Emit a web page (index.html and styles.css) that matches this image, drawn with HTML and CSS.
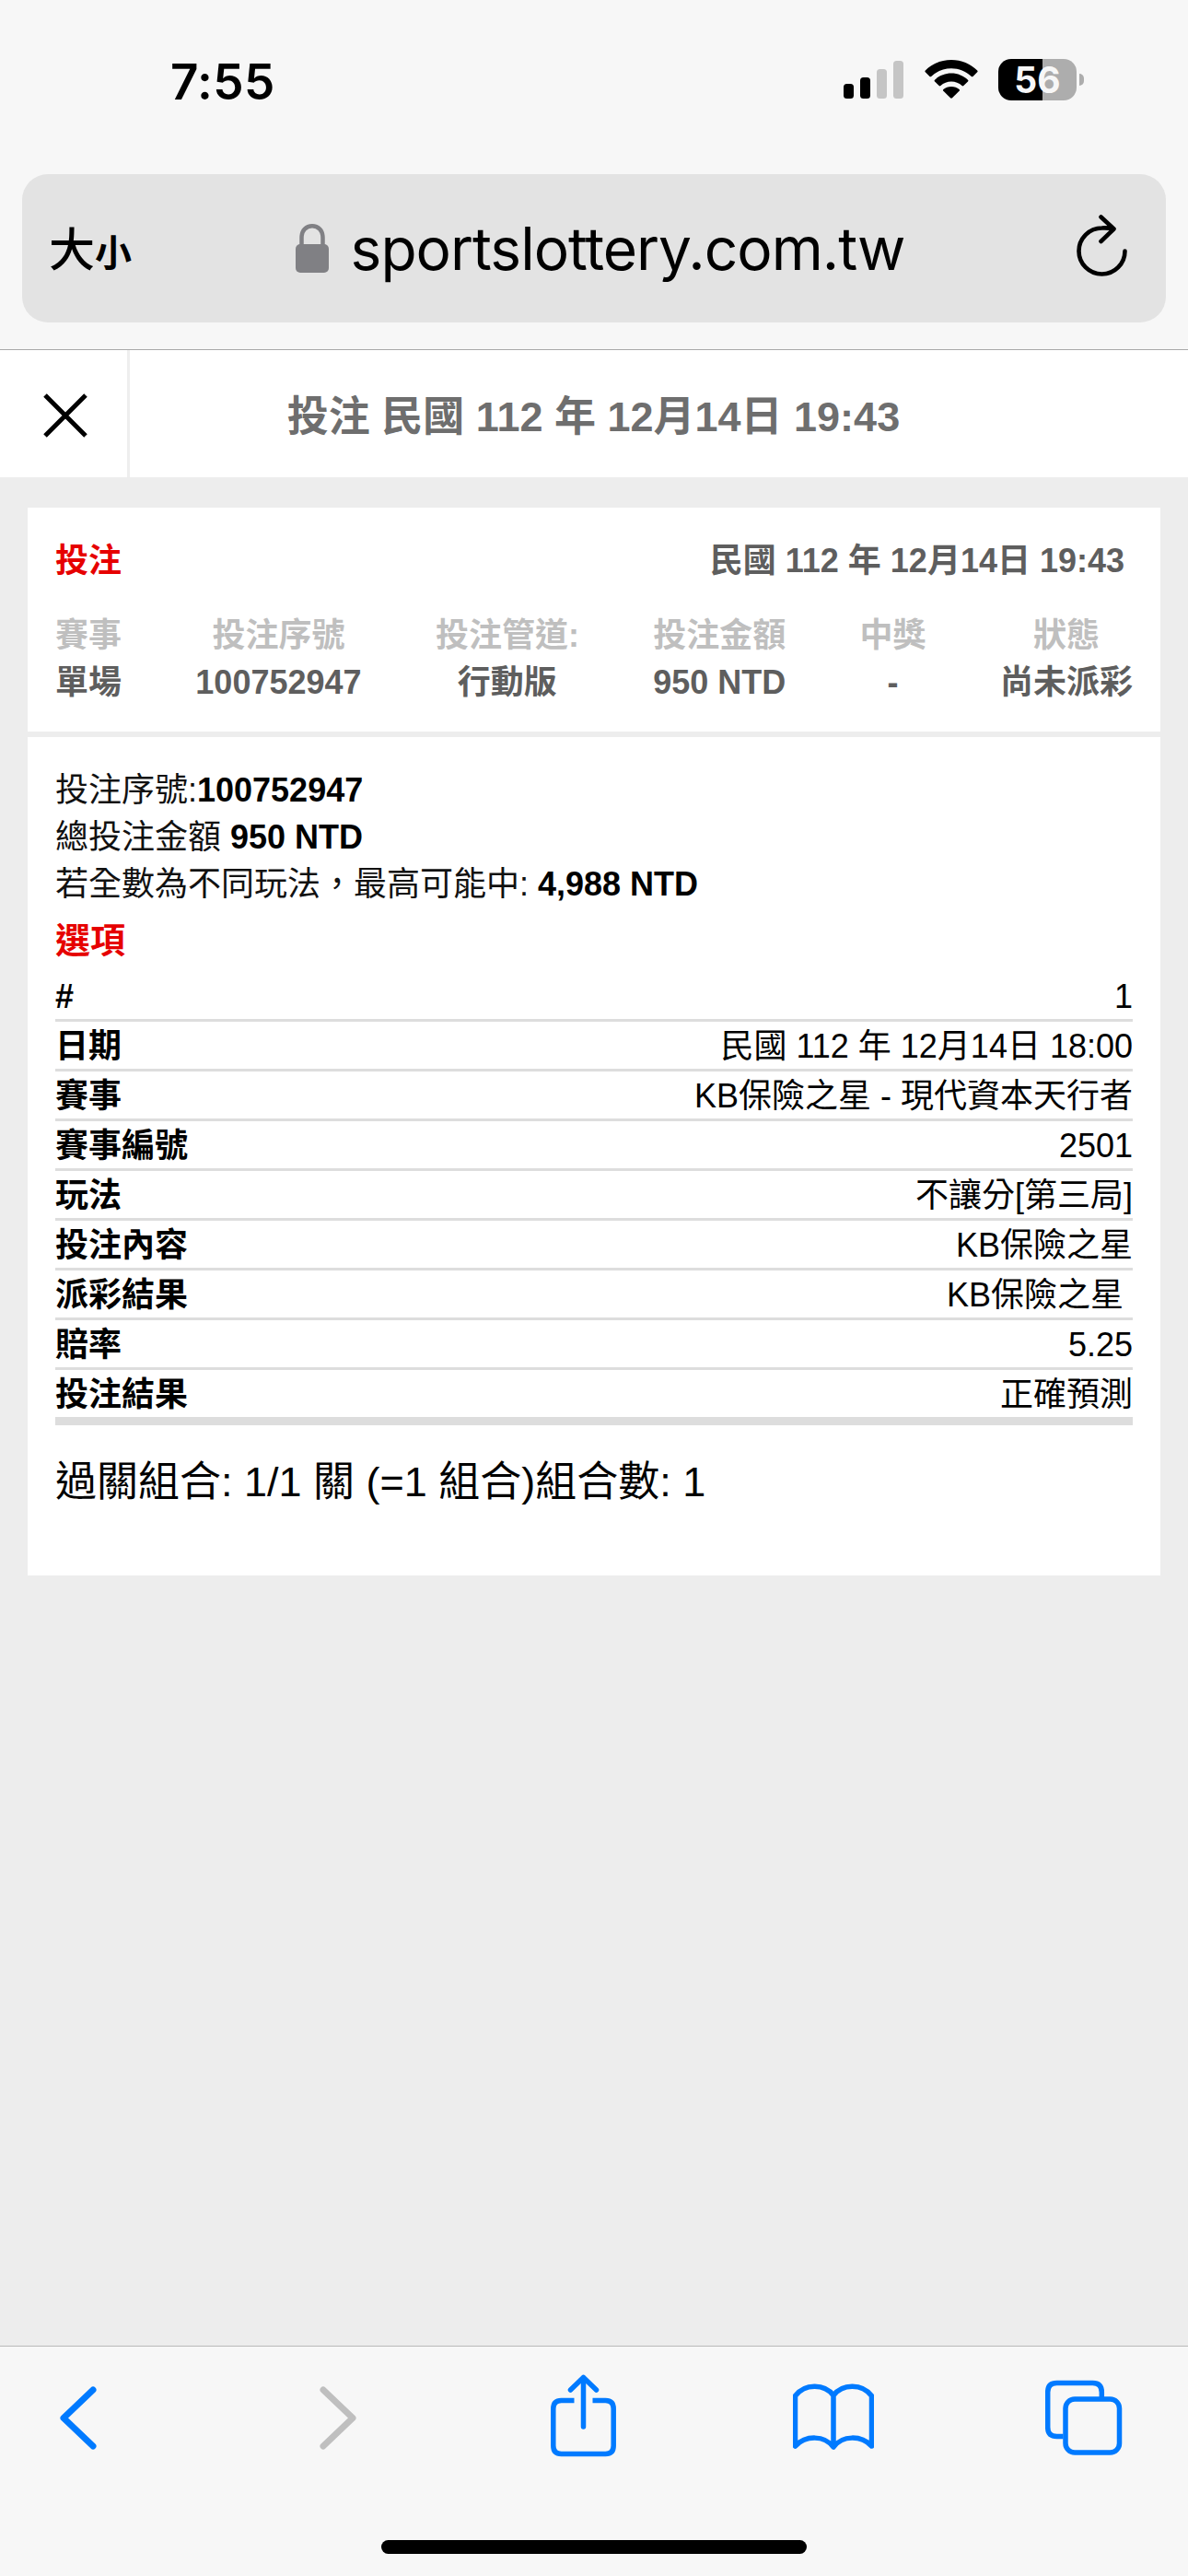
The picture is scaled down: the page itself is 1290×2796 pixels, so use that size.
FILE: index.html
```html
<!DOCTYPE html>
<html lang="zh-TW">
<head>
    <meta charset="UTF-8">
    <meta name="viewport" content="width=device-width, initial-scale=1.0">
    <title>投注 民國 112 年 12月14日 19:43</title>
    <link rel="stylesheet" href="styles.css">
</head>

<body>

    <!-- Browser top -->
    <header class="browser-top">
        <div class="status-bar">
            <span class="time">7:55</span>
            <div class="status-icons">
                <svg class="signal" width="66" height="42" viewBox="0 0 66 42">
                    <rect x="0" y="26" width="11" height="16" rx="3.5"/>
                    <rect x="18" y="19" width="11" height="23" rx="3.5"/>
                    <rect x="36" y="10" width="11" height="32" rx="3.5" fill="#c5c5c5"/>
                    <rect x="54" y="1" width="11" height="41" rx="3.5" fill="#c5c5c5"/>
                </svg>
                <svg class="wifi" width="58" height="42" viewBox="0 0 58 42">
                    <path d="M29 0C40 0 50 4.300 57.200 11.500Q58 12.400 57.200 13.300L52.500 17.900Q51.700 18.700 50.800 17.900C44.800 12.300 37.200 9.200 29 9.200S13.200 12.300 7.200 17.900Q6.300 18.700 5.500 17.900L.8 13.300Q0 12.400 .8 11.500C8 4.300 18 0 29 0Z"/>
                    <path d="M29 14.600C35.900 14.600 42.200 17.300 47 21.700Q47.900 22.600 47 23.500L42.300 28Q41.500 28.800 40.600 28C37.400 25.200 33.400 23.600 29 23.600S20.600 25.200 17.400 28Q16.500 28.800 15.700 28L11 23.500Q10.100 22.600 11 21.700C15.800 17.300 22.100 14.600 29 14.600Z"/>
                    <path d="M29 29C32.300 29 35.300 30.200 37.600 32.100Q38.500 32.900 37.600 33.800L30 41.300Q29 42.200 28 41.300L20.400 33.800Q19.500 32.900 20.400 32.100C22.700 30.200 25.700 29 29 29Z"/>
                </svg>
                <div class="battery">56</div>
                <div class="battery-tip"></div>
            </div>
        </div>
        <div class="address-bar">
            <span class="text-size">大<small>小</small></span>
            <div class="address">
                <svg width="36" height="53" viewBox="0 0 36 53">
                    <rect x="0" y="22" width="36" height="31" rx="5" fill="#808084"/>
                    <path d="M6.500 24V15C6.500 7 11.500 2.300 18 2.300S29.500 7 29.500 15V24" fill="none" stroke="#808084" stroke-width="4.500"/>
                </svg>
                <span class="url">sportslottery.com.tw</span>
            </div>
            <svg class="reload" width="56" height="68" viewBox="0 0 56 68">
                <path d="M52.500 39.500A25 25 0 1 1 27.500 14.500Q33 14 40 15.500M26.500 2.500L40.500 15.500L26.500 29" fill="none" stroke="#000" stroke-width="4.600" stroke-linecap="round" stroke-linejoin="round"/>
            </svg>
        </div>
    </header>

    <!-- Page title -->
    <div class="title-bar">
        <a class="close" href="#">
            <svg width="48" height="48" viewBox="0 0 48 48">
                <path d="M2 2L46 46M46 2L2 46" stroke="#000" stroke-width="5"/>
            </svg>
        </a>
        <h1>投注 民國 112 年 12月14日 19:43</h1>
    </div>

    <!-- Bet details -->
    <main class="content">
        <section class="summary">
            <div class="summary-head">
                <span class="red">投注</span>
                <span>民國 112 年 12月14日 19:43</span>
            </div>
            <dl class="summary-cols">
                <div><dt>賽事</dt><dd>單場</dd></div>
                <div><dt>投注序號</dt><dd>100752947</dd></div>
                <div><dt>投注管道:</dt><dd>行動版</dd></div>
                <div><dt>投注金額</dt><dd>950 NTD</dd></div>
                <div><dt>中獎</dt><dd>-</dd></div>
                <div><dt>狀態</dt><dd>尚未派彩</dd></div>
            </dl>
        </section>

        <section class="details">
            <p>投注序號:<b>100752947</b></p>
            <p>總投注金額 <b>950 NTD</b></p>
            <p>若全數為不同玩法，最高可能中: <b>4,988 NTD</b></p>
            <h2 class="red">選項</h2>
            <ul class="options">
                <li><b>#</b><span>1</span></li>
                <li><b>日期</b><span>民國 112 年 12月14日 18:00</span></li>
                <li><b>賽事</b><span>KB保險之星 - 現代資本天行者</span></li>
                <li><b>賽事編號</b><span>2501</span></li>
                <li><b>玩法</b><span>不讓分[第三局]</span></li>
                <li><b>投注內容</b><span>KB保險之星</span></li>
                <li><b>派彩結果</b><span>KB保險之星&nbsp;</span></li>
                <li><b>賠率</b><span>5.25</span></li>
                <li><b>投注結果</b><span>正確預測</span></li>
            </ul>
            <p class="combo">過關組合: 1/1 關 (=1 組合)組合數: 1</p>
        </section>
    </main>

    <!-- Browser toolbar -->
    <footer class="toolbar">
        <nav class="tools">
            <svg class="back" width="40" height="90" viewBox="0 0 40 90">
                <path d="M36 17L4 47.500L36 78"/>
            </svg>
            <svg class="forward" width="40" height="90" viewBox="0 0 40 90">
                <path d="M4 17L36 47.500L4 78"/>
            </svg>
            <svg class="share" width="71" height="90" viewBox="0 0 71 90">
                <path stroke-linecap="butt" d="M25.500 28.500H11.500Q2.800 28.500 2.800 37.500V77.500Q2.800 86.500 11.500 86.500H59.500Q68.200 86.500 68.200 77.500V37.500Q68.200 28.500 59.500 28.500H45.500"/>
                <path d="M35.500 57V3.500M21.500 17L35.500 3.500L49.500 17"/>
            </svg>
            <svg class="book" width="88" height="90" viewBox="0 0 88 90">
                <path d="M2.500 78V23.500C13 10 34 10 44 23V79C34 66 14 66 2.500 78ZM44 23C54 10 75 10 85.500 23.500V78C74 66 54 66 44 79"/>
            </svg>
            <svg class="tabs" width="84" height="90" viewBox="0 0 84 90">
                <path stroke-linecap="butt" d="M19.500 67.500H12.500Q2.700 67.500 2.700 57.500V19.500Q2.700 9.500 12.500 9.500H51.500Q61.300 9.500 61.300 19.500V27"/>
                <rect x="22" y="27" width="58.500" height="58" rx="10"/>
            </svg>
        </nav>
        <div class="home-bar"></div>
    </footer>

</body>
</html>
```

FILE: styles.css
```css
* {
    box-sizing: border-box;
    margin: 0;
    padding: 0;
}

body {
    display: flex;
    flex-direction: column;
    height: 2796px;
    background-color: #ededed;
    font-family: "Liberation Sans", "Noto Sans CJK TC", sans-serif;
    font-size: 36px;
    line-height: 51px;
    color: #111;
}

svg {
    display: block;
    flex: none;
}

/* Status bar and address bar */
.browser-top {
    height: 380px;
    background-color: #f7f7f7;
    border-bottom: 1px solid #a9a9a9;
}

.status-bar {
    display: flex;
    justify-content: space-between;
    height: 189px;
    padding: 57px 113px 0 185px;
    color: #000;
}

.time {
    font-family: Inter, sans-serif;
    font-size: 53px;
    font-weight: 600;
    line-height: 64px;
    letter-spacing: 0.3px;
}

.status-icons {
    display: flex;
    align-items: flex-start;
    padding-top: 7px;
}

.signal {
    margin: 1px 22px 0 0;
}

.wifi {
    margin: 1px 22px 0 0;
}

.battery {
    width: 85px;
    height: 45px;
    border-radius: 14px;
    background: linear-gradient(to right, #000 48px, #adadad 48px);
    color: #f7f7f7;
    font-family: Inter, sans-serif;
    font-size: 39px;
    font-weight: 700;
    line-height: 45px;
    text-align: center;
}

.battery-tip {
    width: 5px;
    height: 13px;
    margin: 16px 0 0 3px;
    border-radius: 0 5px 5px 0;
    background-color: #adadad;
}

.address-bar {
    display: flex;
    justify-content: space-between;
    align-items: center;
    height: 161px;
    margin: 0 24px;
    padding: 0 41px 0 29px;
    border-radius: 28px;
    background-color: #e3e3e3;
    color: #000;
}

.text-size {
    width: 81px;
    font-family: "Noto Sans CJK TC", sans-serif;
    font-size: 50px;
    font-weight: 500;
    white-space: nowrap;
}

.text-size small {
    font-size: 40px;
    font-weight: 700;
}

.address {
    display: flex;
    align-items: center;
    gap: 24px;
}

.url {
    font-family: Inter, sans-serif;
    font-size: 64px;
    line-height: 80px;
    letter-spacing: -1px;
    font-feature-settings: "calt" 0, "liga" 0;
}

.reload {
    margin-bottom: 6px;
}

/* Title */
.title-bar {
    display: flex;
    height: 138px;
    background-color: #fff;
}

.close {
    display: flex;
    align-items: center;
    width: 141px;
    padding: 3px 0 0 47px;
    border-right: 3px solid #eee;
}

.title-bar h1 {
    flex: 1;
    padding-right: 142px;
    color: #6e6e6e;
    font-size: 45px;
    line-height: 145px;
    text-align: center;
}

/* Cards */
.content {
    flex: 1;
    padding: 33px 30px 0;
}

.red {
    color: #e60000;
}

.summary {
    height: 243px;
    margin-bottom: 6px;
    padding: 32px 30px 0;
    background-color: #fff;
    color: #5e5e5e;
    font-weight: bold;
}

.summary-head {
    display: flex;
    justify-content: space-between;
    padding-right: 9px;
    margin-bottom: 30px;
}

.summary-cols {
    display: flex;
    justify-content: space-between;
    text-align: center;
}

.summary-cols dt {
    color: #bfbfbf;
}

.details {
    height: 910px;
    padding: 32px 30px 0;
    background-color: #fff;
}

.details h2 {
    margin-bottom: 10px;
    padding-top: 12px;
    font-size: 38px;
    line-height: 48px;
}

.details b {
    color: #000;
}

.options {
    list-style: none;
    color: #000;
}

.options li {
    display: flex;
    justify-content: space-between;
    height: 54px;
    border-bottom: 3px solid #ddd;
    line-height: 54px;
}

.options li:last-child {
    height: 60px;
    border-bottom-width: 9px;
}

.combo {
    padding-top: 32px;
    color: #000;
    font-size: 45px;
    line-height: 60px;
}

/* Bottom toolbar */
.toolbar {
    height: 250px;
    border-top: 1px solid #b9b9b9;
    background-color: #f7f7f7;
}

.tools {
    display: flex;
    height: 210px;
    padding: 30px 0 0 65px;
    fill: none;
    stroke: #007aff;
    stroke-width: 5.5;
    stroke-linecap: round;
    stroke-linejoin: round;
}

.back {
    stroke-width: 7;
}

.forward {
    margin-left: 242px;
    stroke: #bfbfbf;
    stroke-width: 7;
}

.share {
    margin-left: 211px;
}

.book {
    margin-left: 192px;
}

.tabs {
    margin-left: 186px;
}

.home-bar {
    width: 462px;
    height: 15px;
    margin: 0 auto;
    border-radius: 8px;
    background-color: #000;
}
```
